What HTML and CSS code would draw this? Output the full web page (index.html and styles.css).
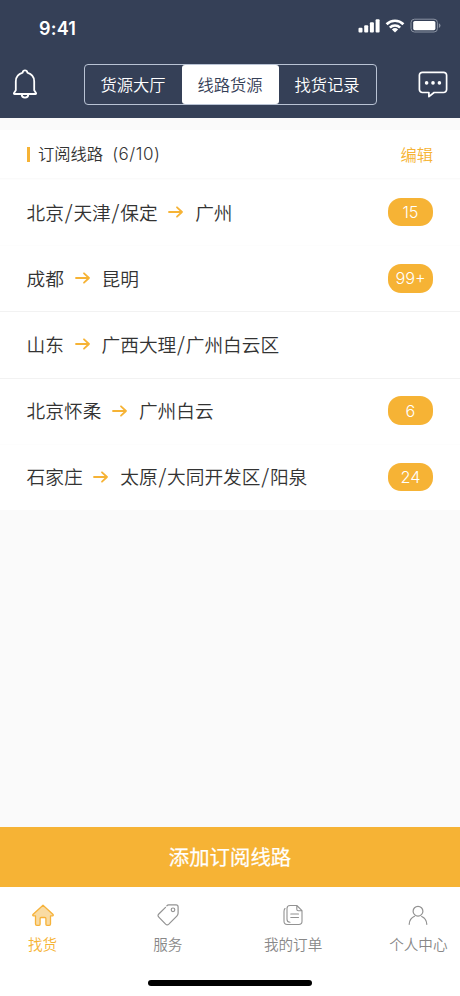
FILE: index.html
```html
<!DOCTYPE html>
<html lang="zh-CN">
<head>
<meta charset="utf-8">
<title>线路货源</title>
<link rel="stylesheet" href="styles.css">
</head>
<body>
<div class="app">
  <header class="header">
    <div class="status">
      <span class="time">9:41</span>
      <svg class="status-icons" width="84" height="16" viewBox="0 0 84 16">
        <g fill="#fff">
          <rect x="0.5" y="9.7" width="4" height="4.8" rx="1"/>
          <rect x="6.2" y="7.2" width="4" height="7.3" rx="1"/>
          <rect x="11.9" y="4.2" width="4" height="10.3" rx="1"/>
          <rect x="17.6" y="1.2" width="4" height="13.3" rx="1"/>
          <rect x="55.2" y="3" width="22.2" height="9.2" rx="1.6"/>
        </g>
        <g fill="none" stroke="#fff" stroke-width="2.7">
          <path d="M28.6 6.2a12 12 0 0 1 16.8 0"/>
          <path d="M31.9 9.6a7.3 7.3 0 0 1 10.2 0"/>
        </g>
        <path d="M33.9 11.5a4.5 4.5 0 0 1 6.2 0L37 14.5z" fill="#fff"/>
        <rect x="53" y="1.2" width="26.4" height="12.8" rx="3.4" fill="none" stroke="#8a92a2"/>
        <path d="M80.9 5.2v4.8q1.6-.8 1.6-2.4t-1.6-2.4z" fill="#8a92a2"/>
      </svg>
    </div>
    <div class="toolbar">
      <svg class="bell" width="26" height="30" viewBox="0 0 26 30" fill="none" stroke="#fff" stroke-width="1.8" stroke-linejoin="round" stroke-linecap="round">
        <path d="M10.7 3.6a2.3 2.3 0 0 1 4.6 0c4.1 1.2 6.9 4.3 6.9 8.8v8.9l1.800 2.700q.4 1-.6 1H2.600q-1 0-.6-1l1.800-2.700v-8.900c0-4.500 2.800-7.600 6.900-8.800"/>
        <path d="M9.700 25.600a3.300 3 0 0 0 6.600 0"/>
      </svg>
      <div class="tabs">
        <span class="tab"><span>货源大厅</span></span>
        <span class="tab active"><span>线路货源</span></span>
        <span class="tab"><span>找货记录</span></span>
      </div>
      <svg width="30" height="28" viewBox="0 0 30 28">
        <path d="M4.400 1.300h21.200a3 3 0 0 1 3 3v14.200a3 3 0 0 1-3 3H16.100l-5.200 4.100v-4.100H4.400a3 3 0 0 1-3-3V4.300a3 3 0 0 1 3-3z" fill="none" stroke="#fff" stroke-width="1.700" stroke-linejoin="round"/>
        <g fill="#fff"><circle cx="8.600" cy="11.900" r="1.800"/><circle cx="15" cy="11.900" r="1.800"/><circle cx="21.400" cy="11.900" r="1.800"/></g>
      </svg>
    </div>
  </header>
  <main class="content">
    <section class="routes">
      <div class="title-row">
        <span class="mark"></span>
        <h1>订阅线路<span class="count"><i>(</i>6/10)</span></h1>
        <a class="edit">编辑</a>
      </div>
      <div class="route"><span>北京<b>/</b>天津<b>/</b>保定</span><svg class="arrow" viewBox="0 0 16 12"><path d="M1 6h13M9 1.300l5 4.700-5 4.700"/></svg><span>广州</span><em class="badge">15</em></div>
      <div class="route"><span>成都</span><svg class="arrow" viewBox="0 0 16 12"><path d="M1 6h13M9 1.300l5 4.700-5 4.700"/></svg><span>昆明</span><em class="badge">99+</em></div>
      <div class="route lined"><span>山东</span><svg class="arrow" viewBox="0 0 16 12"><path d="M1 6h13M9 1.300l5 4.700-5 4.700"/></svg><span>广西大理<b>/</b>广州白云区</span></div>
      <div class="route lined"><span>北京怀柔</span><svg class="arrow" viewBox="0 0 16 12"><path d="M1 6h13M9 1.300l5 4.700-5 4.700"/></svg><span>广州白云</span><em class="badge">6</em></div>
      <div class="route"><span>石家庄</span><svg class="arrow" viewBox="0 0 16 12"><path d="M1 6h13M9 1.300l5 4.700-5 4.700"/></svg><span>太原<b>/</b>大同开发区<b>/</b>阳泉</span><em class="badge">24</em></div>
    </section>
  </main>
  <button class="add">添加订阅线路</button>
  <nav class="nav">
    <a class="item current">
      <svg width="24" height="24" viewBox="0 0 24 24"><path d="M12 2.200 1.900 11.600q-.5 1 .6 1.200h2v8.200q0 1.300 1.300 1.300h2.300q1 0 1-1v-5.800q0-1 1-1h3.800q1 0 1 1v5.800q0 1 1 1h2.300q1.300 0 1.300-1.300v-8.200h2q1.100-.2.600-1.200z" fill="#f9dba3" stroke="#f6b23a" stroke-width="1.300" stroke-linejoin="round"/></svg>
      <span>找货</span>
    </a>
    <a class="item">
      <svg width="24" height="24" viewBox="0 0 24 24" fill="none" stroke="#929292" stroke-width="1.200" stroke-linecap="round" stroke-linejoin="round"><path d="M9.500 4.300 2.800 11q-1.600 1.600 0 3.200l6.800 6.900q1.600 1.500 3.200 0l8-8q1.200-1.200 1.300-2.800V3.900q0-2-2-2h-7.300q-1.200 0-2 1"/><circle cx="17" cy="6.800" r="1.800"/></svg>
      <span>服务</span>
    </a>
    <a class="item">
      <svg width="24" height="24" viewBox="0 0 24 24" fill="none" stroke="#929292" stroke-width="1.100" stroke-linecap="round" stroke-linejoin="round"><path d="M15.800 2.500H9q-3 0-3 3v10.700q0 3 3 3M15.800 2.500v3.700q0 1.500 1.500 1.500H21L15.800 2.500M21 7.700v10.600q0 3.200-3.200 3.200H6.200Q3 21.500 3 18.300V8.500q0-2 1-3M9.800 11h7.700M9.800 14.500h7.700"/></svg>
      <span>我的订单</span>
    </a>
    <a class="item">
      <svg width="24" height="24" viewBox="0 0 24 24" fill="none" stroke="#929292" stroke-width="1.200" stroke-linecap="round"><circle cx="12" cy="8.200" r="4.900"/><path d="M3.200 21.300c.2-4 2.300-6.700 5.300-8M15.700 13.500c2.900 1.200 4.900 4.100 5.100 7.800"/></svg>
      <span>个人中心</span>
    </a>
  </nav>
  <div class="home"></div>
</div>
</body>
</html>
```
FILE: styles.css
```css
* { box-sizing: border-box; }
body { margin: 0; }
.app {
  width: 460px;
  height: 996px;
  display: flex;
  flex-direction: column;
  background: #fff;
  font-family: Inter, "Noto Sans CJK SC", sans-serif;
  font-weight: 350;
  color: #333;
}
.header { height: 118px; flex: none; background: #354057; color: #fff; }
.status {
  height: 54px;
  padding: 0 18px 0 39px;
  display: flex;
  justify-content: space-between;
  align-items: center;
}
.time { font-size: 18px; font-weight: 600; letter-spacing: .2px; padding-top: 2px; }
.status-icons { margin-bottom: 2px; }
.toolbar {
  height: 61px;
  padding: 0 12px;
  display: flex;
  align-items: center;
  justify-content: space-between;
}
.bell { margin-bottom: 1px; }
.tabs {
  width: 293px;
  height: 41px;
  margin-left: 4px;
  border: 1px solid #b9c3d4;
  border-radius: 4px;
  display: grid;
  grid-template-columns: repeat(3, 1fr);
}
.tab {
  display: flex;
  align-items: center;
  justify-content: center;
  padding-bottom: 1px;
  font-size: 16.300px;
}
.tab.active { background: #fff; color: #354057; border-radius: 3px; }
.content { flex: 1; background: #fafafa; padding-top: 12px; }
.routes { background: #fff; }
.title-row {
  height: 49px;
  padding: 0 27px;
  display: flex;
  align-items: center;
  border-bottom: 1px solid #fafafa;
}
.mark { width: 3px; height: 15px; background: #f6b335; }
h1 { margin: 0 0 0 8px; padding-bottom: 2px; font-size: 16.300px; font-weight: inherit; }
.count { font-size: 17px; letter-spacing: .5px; }
.count i { font-style: normal; margin-left: 9px; }
.edit { margin-left: auto; padding-bottom: 1px; font-size: 16.300px; color: #f6b335; }
.route {
  height: 66.200px;
  padding: 0 27px 1px 26.600px;
  display: flex;
  align-items: center;
  font-size: 18.700px;
  border-top: 1px solid #fdfdfd;
}
.route span { padding-bottom: 2px; }
.route.lined { border-top-color: #f2f2f2; }
.route b {
  font-family: "Noto Sans CJK SC", sans-serif;
  font-weight: inherit;
  font-size: 20px;
  line-height: 1;
  margin: 0 .800px;
}
.arrow {
  width: 16px;
  height: 12px;
  margin: 0 10.800px;
  fill: none;
  stroke: #f6b335;
  stroke-width: 1.800;
  stroke-linecap: round;
  stroke-linejoin: round;
}
.badge {
  width: 45px;
  height: 28.500px;
  margin-left: auto;
  border-radius: 13px;
  background: #f6b335;
  color: #fff;
  font-size: 16.300px;
  font-style: normal;
  font-weight: 300;
  display: flex;
  align-items: center;
  justify-content: center;
}
.add {
  flex: none;
  height: 60px;
  border: 0;
  padding: 0 0 2px;
  background: #f6b335;
  color: #fff;
  font: 400 20.400px "Noto Sans CJK SC", sans-serif;
  -webkit-text-stroke: .25px #fff;
}
.nav {
  height: 84px;
  flex: none;
  padding-top: 16px;
  display: flex;
  justify-content: space-between;
  margin: 0 -21px 0 -20px;
}
.item {
  width: 125.500px;
  display: flex;
  flex-direction: column;
  align-items: center;
  font-size: 14.600px;
  color: #888;
}
.item span { margin-top: 7px; line-height: 22px; }
.item.current { color: #f6b335; }
.home { width: 164px; height: 6px; margin: 9px auto 10px; border-radius: 3px; background: #000; flex: none; }
```
